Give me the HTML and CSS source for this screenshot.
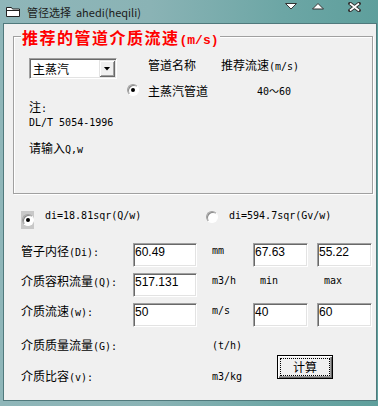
FILE: index.html
```html
<!DOCTYPE html>
<html lang="zh-CN">
<head>
    <meta charset="UTF-8">
    <meta name="viewport" content="width=device-width, initial-scale=1.0">
    <title>管径选择</title>
    <link rel="stylesheet" href="styles.css">
</head>
<body>
<div class="window">
    <div class="titlebar">
        <svg class="app-icon" width="16" height="12" viewBox="0 0 16 12">
            <path d="M1.5 1.5h5l1 1.5h7v7.5h-13z" fill="#fff" stroke="#222"/>
            <path d="M1.5 4.5h13" stroke="#222"/>
        </svg>
        <span class="title">管径选择  ahedi(heqili)</span>
        <div class="caption-btns">
            <svg class="btn-min" width="12" height="8" viewBox="0 0 12 8">
                <polygon points="0.5,1.5 11.5,1.5 6,7" fill="#fff" stroke="#333"/>
            </svg>
            <svg class="btn-max" width="12" height="8" viewBox="0 0 12 8">
                <polygon points="0.5,7 11.5,7 6,1.5" fill="#fff" stroke="#333"/>
            </svg>
            <svg width="13" height="10" viewBox="0 0 13 10">
                <path d="M2 1.5l9 7M11 1.5l-9 7" stroke="#333" stroke-width="3.5" stroke-linecap="square"/>
                <path d="M2 1.5l9 7M11 1.5l-9 7" stroke="#fff" stroke-width="1.6"/>
            </svg>
        </div>
    </div>
    <div class="client">
        <div class="group">
            <div class="legend">推荐的管道介质流速<span class="legend-en">(m/s)</span></div>
            <div class="rec-grid">
                <div class="combo">
                    <span class="combo-text">主蒸汽</span>
                    <span class="combo-btn"><i class="arrow-down"></i></span>
                </div>
                <span class="head name-col">管道名称</span>
                <span class="head">推荐流速<span class="en">(m/s)</span></span>
                <span class="radio checked radio-col"></span>
                <span class="name-col">主蒸汽管道</span>
                <span class="en speed">40～60</span>
            </div>
            <div class="notes">
                <p>注<span class="en">:</span></p>
                <p class="en">DL/T 5054-1996</p>
                <p class="hint">请输入<span class="en">Q,w</span></p>
            </div>
        </div>

        <div class="formula">
            <div class="opt opt-first">
                <span class="radio-focus"><span class="radio checked"></span></span>
                <span class="opt-text en">di=18.81sqr(Q/w)</span>
            </div>
            <div class="opt">
                <span class="radio"></span>
                <span class="opt-text en">di=594.7sqr(Gv/w)</span>
            </div>
        </div>

        <div class="calc">
            <span class="lbl">管子内径<span class="en">(Di):</span></span>
            <input class="edit" type="text" value="60.49">
            <span class="lbl unit en">mm</span>
            <input class="edit narrow" type="text" value="67.63">
            <input class="edit narrow" type="text" value="55.22">

            <span class="lbl">介质容积流量<span class="en">(Q):</span></span>
            <input class="edit" type="text" value="517.131">
            <span class="lbl unit en">m3/h</span>
            <span class="lbl limit en">min</span>
            <span class="lbl limit en">max</span>

            <span class="lbl">介质流速<span class="en">(w):</span></span>
            <input class="edit" type="text" value="50">
            <span class="lbl unit en">m/s</span>
            <input class="edit narrow" type="text" value="40">
            <input class="edit narrow" type="text" value="60">

            <span class="lbl mid row4">介质质量流量<span class="en">(G):</span></span>
            <span class="lbl mid unit en row4 unit-col">(t/h)</span>
            <button class="btn" type="button"><span class="btn-focus">计算</span></button>

            <span class="lbl mid row5">介质比容<span class="en">(v):</span></span>
            <span class="lbl mid unit en row5 unit-col">m3/kg</span>
        </div>
    </div>
</div>
</body>
</html>
```

FILE: styles.css
```css
body {
    margin: 0;
    background-color: #6f9fa1;
    font-family: "Noto Sans CJK SC", sans-serif;
    font-size: 12px;
    color: #000;
}
.window {
    width: 378px;
    height: 406px;
    display: flex;
    flex-direction: column;
    background: linear-gradient(to right, #8fb6b9 0%, #8ab3b5 40%, #6ca6a5 75%, #5e9f9c 100%);
}

/* title bar */
.titlebar {
    height: 23px;
    display: flex;
    align-items: flex-start;
    padding-left: 5px;
}
.app-icon {
    margin-top: 6px;
}
.title {
    margin-left: 6px;
    margin-top: 4px;
    font-size: 11px;
    line-height: 16px;
    color: #1b1b1b;
    white-space: pre;
}
.caption-btns {
    margin-left: auto;
    margin-top: 2px;
    padding-right: 17px;
    display: flex;
    align-items: flex-start;
}
.caption-btns svg {
    display: block;
}
.btn-min {
    margin-right: 15px;
}
.btn-max {
    margin-right: 24px;
}

/* client area */
.client {
    height: 378px;
    box-sizing: border-box;
    margin: 0 1px 0 3px;
    border: 1px solid #50797c;
    background-color: #f0f0f0;
}
.en {
    font-family: "DejaVu Sans Mono", "Noto Sans CJK SC", monospace;
    font-size: 10px;
}

/* group box */
.group {
    position: relative;
    width: 360px;
    height: 158px;
    box-sizing: border-box;
    margin: 12px 0 0 9px;
    padding: 21px 0 0 15px;
    border: 1px solid #a0a0a0;
    box-shadow: 1px 1px 0 #fff, inset 1px 1px 0 #fff;
}
.legend {
    position: absolute;
    top: -8px;
    left: 7px;
    padding: 0 1px;
    background-color: #f0f0f0;
    color: #ff0000;
    font-size: 16px;
    font-weight: bold;
    line-height: 16px;
    letter-spacing: 1.5px;
}
.legend-en {
    font-family: "Liberation Mono", monospace;
    font-size: 13px;
    letter-spacing: 0;
}
.rec-grid {
    display: grid;
    grid-template-columns: 98px 21px 73px auto;
    grid-template-rows: 21px 16px;
    row-gap: 3px;
    align-items: center;
}
.head {
    align-self: start;
    line-height: 14px;
}
.name-col {
    grid-column: 3;
}
.radio-col {
    grid-column: 2;
}
.speed {
    padding-left: 36px;
}
.combo {
    width: 88px;
    height: 21px;
    box-sizing: border-box;
    display: flex;
    padding: 1px;
    border: 1px solid;
    border-color: #a0a0a0 #fff #fff #a0a0a0;
    box-shadow: inset 1px 1px 0 #696969, inset -1px -1px 0 #e3e3e3;
    background-color: #fff;
}
.combo-text {
    flex: 1;
    padding-left: 2px;
    line-height: 17px;
}
.combo-btn {
    width: 16px;
    display: flex;
    align-items: center;
    justify-content: center;
    background-color: #f0f0f0;
    box-shadow: inset 1px 1px 0 #e3e3e3, inset -1px -1px 0 #696969, inset 2px 2px 0 #fff, inset -2px -2px 0 #a0a0a0;
}
.arrow-down {
    width: 7px;
    height: 4px;
    background-color: #000;
    clip-path: polygon(0 0, 100% 0, 50% 100%);
}
.radio {
    width: 12px;
    height: 12px;
    box-sizing: border-box;
    display: flex;
    align-items: center;
    justify-content: center;
    border-radius: 50%;
    border: 1px solid;
    border-color: #a0a0a0 #fff #fff #a0a0a0;
    box-shadow: inset 1px 1px 0 #8a8a8a;
    background-color: #fff;
}
.radio.checked::after {
    content: "";
    width: 4px;
    height: 4px;
    border-radius: 50%;
    background-color: #000;
}
.notes {
    margin-top: 2px;
    line-height: 14px;
}
.notes p {
    margin: 0;
}
.notes .hint {
    margin-top: 11px;
}

/* formula choice */
.formula {
    display: flex;
    align-items: flex-start;
    height: 20px;
    margin-top: 14px;
    padding-left: 17px;
}
.opt {
    display: flex;
    align-items: flex-start;
}
.opt-first {
    width: 185px;
}
.opt .radio {
    margin-top: 3px;
}
.radio-focus {
    width: 13px;
    height: 18px;
    margin-top: 3px;
    display: flex;
    align-items: center;
    justify-content: center;
    background-color: #c8c8c8;
}
.radio-focus .radio {
    margin-top: 0;
}
.opt-text {
    margin-left: 11px;
    margin-top: 1px;
    line-height: 14px;
}

/* calculation grid */
.calc {
    display: grid;
    grid-template-columns: 112px 64px 56px 64px 55px;
    grid-template-rows: 24px 24px 24px 25px 25px;
    row-gap: 6px;
    margin-top: 15px;
    padding-left: 17px;
}
.lbl {
    align-self: start;
    margin-top: 1px;
    line-height: 14px;
}
.lbl.mid {
    align-self: center;
    margin-top: 0;
}
.unit {
    padding-left: 15px;
}
.limit {
    padding-left: 7px;
}
.row4 {
    grid-row: 4;
}
.row5 {
    grid-row: 5;
}
.unit-col {
    grid-column: 3;
}
.edit {
    width: 64px;
    height: 24px;
    box-sizing: border-box;
    margin: 0;
    padding: 2px 1px 8px 1px;
    border: 1px solid;
    border-color: #a0a0a0 #fff #fff #a0a0a0;
    box-shadow: inset 1px 1px 0 #696969, inset -1px -1px 0 #e3e3e3;
    background-color: #fff;
    font-family: "Liberation Sans", sans-serif;
    font-size: 12px;
    color: #000;
    outline: none;
}
.edit.narrow {
    width: 55px;
}
.btn {
    grid-column: 4 / 6;
    grid-row: 4 / 6;
    align-self: end;
    justify-self: start;
    width: 56px;
    height: 24px;
    box-sizing: border-box;
    margin: 0 0 10px 24px;
    padding: 2px;
    border: 1px solid #000;
    background-color: #f0f0f0;
    box-shadow: inset 1px 1px 0 #fff, inset -1px -1px 0 #696969, inset -2px -2px 0 #a0a0a0;
    font-family: inherit;
    font-size: 12px;
    color: #000;
}
.btn-focus {
    display: block;
    height: 100%;
    box-sizing: border-box;
    border: 1px dotted #000;
    line-height: 16px;
}
```
